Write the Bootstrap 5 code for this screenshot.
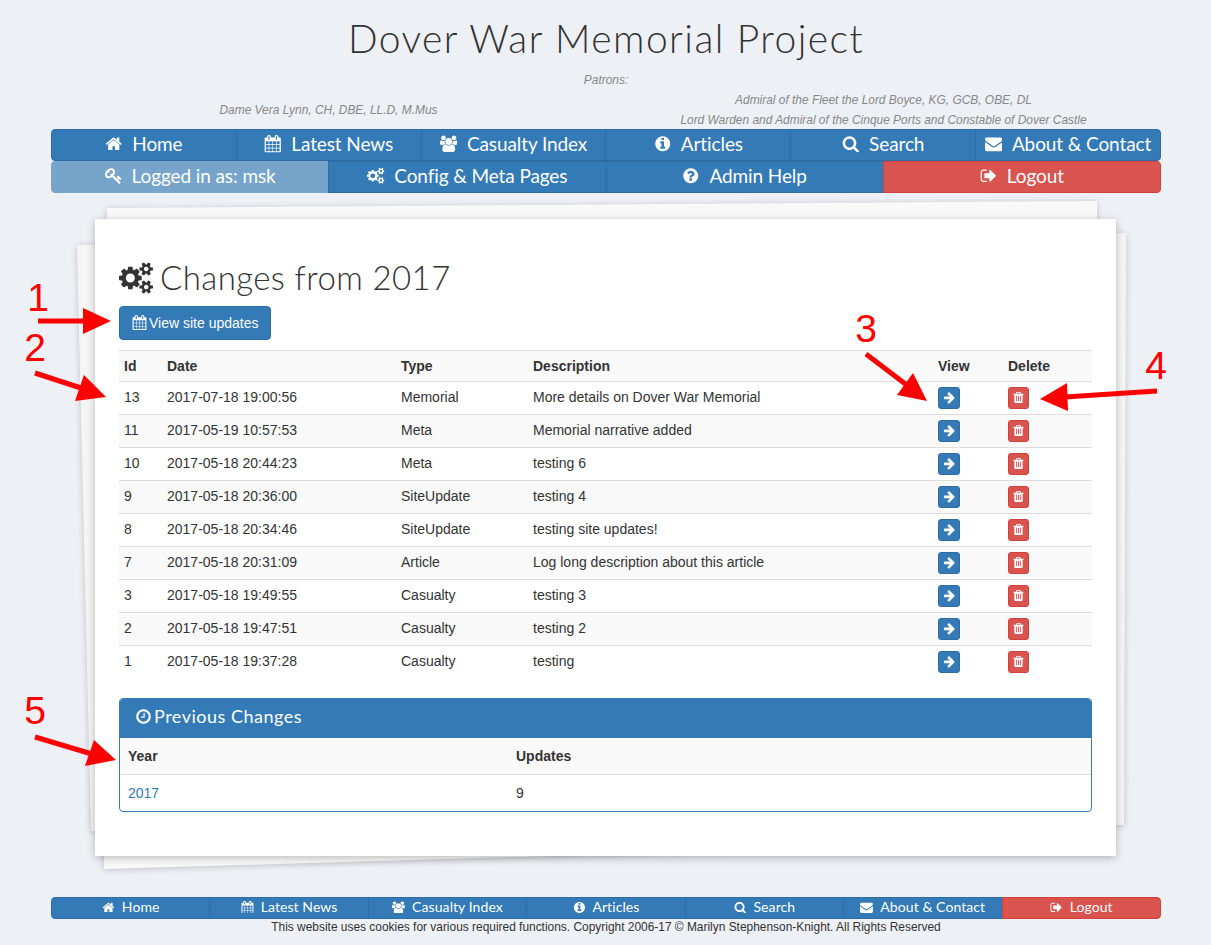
<!DOCTYPE html>
<html lang="en">
<head>
    <meta charset="utf-8">
    <meta name="viewport" content="width=device-width, initial-scale=1, shrink-to-fit=no">
    <title>Dover War Memorial Project</title>
    <link rel="stylesheet" href="https://cdn.jsdelivr.net/npm/bootstrap@5.3.0/dist/css/bootstrap.min.css">
<style>
    html, body { height: 945px; overflow: hidden; }
    body {
        position: relative;
        background: #edf0f5;
        color: #333;
        font-family: "Liberation Sans", Arial, sans-serif;
        font-size: 14px;
        line-height: 20px;
    }
    .round-font { font-family: Lato, "Noto Sans", sans-serif; }
    .page-wrap { width: 1110px; margin: 0 0 0 51px; position: relative; }
    .site-title { font-size: 39px; line-height: 44px; font-weight: 300; letter-spacing: 1.43px; padding-top: 16px; margin: 0; color: #333; }
    .patrons { font-size: 11.93px; font-style: italic; color: #888; line-height: 20px; }
    .patrons-head { margin-top: 10px; }
    .patrons-rows { margin-bottom: -1px; }
    .patron-col { width: 50%; }

    .bar-btn {
        --bs-btn-bg: #337ab7; --bs-btn-border-color: #2e6da4;
        --bs-btn-hover-bg: #337ab7; --bs-btn-hover-border-color: #2e6da4;
        --bs-btn-disabled-bg: #76a4cb; --bs-btn-disabled-border-color: #76a4cb; --bs-btn-disabled-opacity: 1;
        --bs-btn-disabled-color: #fff;
        --bs-btn-color: #fff; --bs-btn-hover-color: #fff; --bs-btn-border-radius: 4px;
    }
    .bar-logout {
        --bs-btn-bg: #d9534f; --bs-btn-border-color: #d43f3a; --bs-btn-color: #fff;
        --bs-btn-hover-bg: #d9534f; --bs-btn-hover-border-color: #d43f3a; --bs-btn-hover-color: #fff; --bs-btn-border-radius: 4px;
    }
    .top-bar .btn { height: 32px; padding: 0; font-size: 19px; line-height: 28px; letter-spacing: -.1px; flex: 1 1 0; }
    .foot-bar .btn { height: 22px; padding: 0; font-size: 14px; line-height: 18px; letter-spacing: .08px; flex: 1 1 0; }
    .ico { width: .92em; height: .92em; fill: currentColor; vertical-align: -0.1em; margin-right: .5em; }

    .paper {
        position: relative;
        width: 1021px; height: 637px;
        margin: 26px 0 0 44px;
        padding: 38px 24px 0;
        background: #fff;
        box-shadow: 0 2px 8px rgba(0,0,0,.25);
    }
    .paper-title { font-size: 33px; line-height: 40px; font-weight: 300; letter-spacing: .4px; margin: 0 0 9px; color: #333; }
    .paper-title .ico { margin-right: 7px; vertical-align: -0.14em; width: 34px; height: 34px; }
    .update-btn {
        --bs-btn-padding-x: 12px; --bs-btn-padding-y: 6px; --bs-btn-font-size: 14px; --bs-btn-line-height: 20px;
        margin-bottom: 10px; width: 152px; white-space: nowrap;
    }
    .update-btn .ico { margin-right: 2px; width: 15px; height: 15px; vertical-align: -2px; }

    .log-table {
        --bs-table-border-color: #ddd; --bs-table-striped-bg: #f9f9f9; --bs-table-color: #333; --bs-table-striped-color: #333;
        table-layout: fixed; width: 973px; margin: 0;
        border-top: 1px solid #ddd;
    }
    .log-table td, .log-table th { padding: 5px; line-height: 20px; vertical-align: top; }
    .log-table tr:last-child td { border-bottom: 0; }
    .w-id { width: 43px; } .w-date { width: 234px; } .w-type { width: 132px; }
    .w-desc { width: 405px; } .w-view { width: 70px; } .w-del { width: 89px; }
    .row-btn { --bs-btn-padding-x: 0; --bs-btn-padding-y: 0; --bs-btn-border-radius: 3px; width: 22px; height: 22px; line-height: 18px; display: block; }
    .row-btn .ico { margin: 0; width: 13px; height: 13px; vertical-align: -2px; }
    .del-btn { width: 21px; }

    .prev-card { --bs-card-border-color: #337ab7; --bs-card-border-radius: 4px; --bs-card-inner-border-radius: 3px; margin-top: 20px; height: 114px; }
    .prev-head { background: #337ab7; color: #fff; font-size: 18px; line-height: 24px; height: 39px; padding: 5px 15px; letter-spacing: .5px; border: 0; }
    .prev-head .ico { width: 17px; height: 17px; margin-right: 2px; vertical-align: -2px; }
    .prev-table { --bs-table-border-color: #ddd; --bs-table-color: #333; table-layout: fixed; margin: 0; }
    .prev-table th, .prev-table td { padding: 8px; line-height: 20px; }
    .prev-table th { background: #f9f9f9; border-bottom: 1px solid #ddd; }
    .prev-table tr:last-child td { border: 0; padding-bottom: 7px; }
    .prev-table a { color: #337ab7; text-decoration: none; }
    .w-year { width: 388px; }

    .foot-bar { margin-top: 41px; }
    .foot-note { font-size: 11.93px; line-height: 16px; text-align: center; color: #333; }

    .sheets { position: absolute; left: 0; top: 0; }
    .sheets polygon { filter: drop-shadow(0 1px 3px rgba(0,0,0,.2)); }
    .marks { position: absolute; left: 0; top: 0; pointer-events: none; z-index: 5; }
    .marks text { font-family: "Liberation Sans", Arial, sans-serif; font-size: 39px; fill: #f00; text-anchor: middle; }
</style>
</head>
    <body>
        <svg width="0" height="0" class="d-none">
            <symbol id="i-home" viewBox="0 0 1792 1792"><path d="M1472 992v480q0 26-19 45t-45 19h-384v-384h-256v384h-384q-26 0-45-19t-19-45v-480q0-1 .5-3t.5-3l575-474 575 474q1 2 1 6zm223-69l-62 74q-8 9-21 11h-3q-13 0-21-7l-692-577-692 577q-12 8-24 7-13-2-21-11l-62-74q-8-10-7-23.500t11-21.500l719-599q32-26 76-26t76 26l244 204v-195q0-14 9-23t23-9h192q14 0 23 9t9 23v408l219 182q10 8 11 21.500t-7 23.500z"/></symbol>
            <symbol id="i-cal" viewBox="0 0 1792 1792"><path d="M192 1664h288v-288h-288v288zm352 0h320v-288h-320v288zm-352-352h288v-320h-288v320zm352 0h320v-320h-320v320zm-352-384h288v-288h-288v288zm736 736h320v-288h-320v288zm-384-736h320v-288h-320v288zm768 736h288v-288h-288v288zm-384-352h320v-320h-320v320zm-352-864v-288q0-13-9.500-22.500t-22.500-9.500h-64q-13 0-22.500 9.500t-9.500 22.500v288q0 13 9.500 22.500t22.500 9.500h64q13 0 22.500-9.500t9.500-22.500zm736 864h288v-320h-288v320zm-384-384h320v-288h-320v288zm384 0h288v-288h-288v288zm32-480v-288q0-13-9.500-22.500t-22.500-9.500h-64q-13 0-22.500 9.500t-9.500 22.500v288q0 13 9.500 22.500t22.500 9.500h64q13 0 22.500-9.500t9.500-22.500zm384-64v1280q0 52-38 90t-90 38h-1408q-52 0-90-38t-38-90v-1280q0-52 38-90t90-38h128v-96q0-66 47-113t113-47h64q66 0 113 47t47 113v96h384v-96q0-66 47-113t113-47h64q66 0 113 47t47 113v96h128q52 0 90 38t38 90z"/></symbol>
            <symbol id="i-users" viewBox="0 0 1920 1792"><path d="M593 896q-162 5-265 128h-134q-82 0-138-40.500t-56-118.500q0-353 124-353 6 0 43.500 21t97.500 42.500 119 21.500q67 0 133-23-5 37-5 66 0 139 81 256zm1071 637q0 120-73 189.500t-194 69.500h-874q-121 0-194-69.500t-73-189.500q0-53 3.500-103.500t14-109 26.500-108.500 43-97.500 62-81 85.500-53.500 111.500-20q10 0 43 21.500t73 48 107 48 135 21.500 135-21.500 107-48 73-48 43-21.500q61 0 111.500 20t85.500 53.500 62 81 43 97.500 26.500 108.500 14 109 3.500 103.500zm-1024-1277q0 106-75 181t-181 75-181-75-75-181 75-181 181-75 181 75 75 181zm704 384q0 159-112.500 271.500t-271.500 112.500-271.500-112.500-112.500-271.500 112.500-271.500 271.500-112.500 271.500 112.500 112.500 271.500zm576 225q0 78-56 118.500t-138 40.500h-134q-103-123-265-128 81-117 81-256 0-29-5-66 66 23 133 23 59 0 119-21.500t97.500-42.500 43.500-21q124 0 124 353zm-128-609q0 106-75 181t-181 75-181-75-75-181 75-181 181-75 181 75 75 181z"/></symbol>
            <symbol id="i-info" viewBox="0 0 1792 1792"><path d="M1152 1376v-160q0-14-9-23t-23-9h-96v-512q0-14-9-23t-23-9h-320q-14 0-23 9t-9 23v160q0 14 9 23t23 9h96v320h-96q-14 0-23 9t-9 23v160q0 14 9 23t23 9h448q14 0 23-9t9-23zm-128-896v-160q0-14-9-23t-23-9h-192q-14 0-23 9t-9 23v160q0 14 9 23t23 9h192q14 0 23-9t9-23zm640 416q0 209-103 385.500t-279.500 279.500-385.500 103-385.500-103-279.500-279.500-103-385.500 103-385.500 279.500-279.500 385.500-103 385.500 103 279.500 279.500 103 385.500z"/></symbol>
            <symbol id="i-search" viewBox="0 0 1792 1792"><path d="M1216 832q0-185-131.500-316.500t-316.500-131.500-316.500 131.500-131.500 316.500 131.500 316.500 316.500 131.500 316.500-131.500 131.500-316.500zm512 832q0 52-38 90t-90 38q-54 0-90-38l-343-342q-179 124-399 124-143 0-273.500-55.500t-225-150-150-225-55.500-273.500 55.500-273.500 150-225 225-150 273.500-55.500 273.500 55.500 225 150 150 225 55.500 273.500q0 220-124 399l343 343q37 37 37 90z"/></symbol>
            <symbol id="i-env" viewBox="0 0 1792 1792"><path d="M1792 710v794q0 66-47 113t-113 47h-1472q-66 0-113-47t-47-113v-794q44 49 101 87 362 246 497 345 57 42 92.500 65.500t94.500 48 110 24.500h2q51 0 110-24.500t94.500-48 92.500-65.500q170-123 498-345 57-39 100-87zm0-294q0 79-49 151t-122 123q-376 261-468 325-10 7-42.500 30.500t-54 38-52 32.500-57.500 27-50 9h-2q-23 0-50-9t-57.500-27-52-32.500-54-38-42.500-30.500q-91-64-262-182.500t-205-142.500q-62-42-117-115.500t-55-136.500q0-78 41.500-130t118.500-52h1472q65 0 112.500 47t47.500 113z"/></symbol>
            <symbol id="i-key" viewBox="0 0 1792 1792"><path d="M832 512q0-80-56-136t-136-56-136 56-56 136q0 42 19 83-41-19-83-19-80 0-136 56t-56 136 56 136 136 56 136-56 56-136q0-42-19-83 41 19 83 19 80 0 136-56t56-136zm851 704q0 17-49 66t-66 49q-9 0-28.500-16t-36.500-33-38.500-40-24.500-26l-96 96 220 220q28 28 28 68 0 42-39 81t-81 39q-40 0-68-28l-671-671q-176 131-365 131-163 0-265.500-102.500t-102.500-265.500q0-160 95-313t248-248 313-95q163 0 265.500 102.500t102.500 265.500q0 189-131 365l355 355 96-96q-3-3-26-24.500t-40-38.500-33-36.500-16-28.500q0-17 49-66t66-49q13 0 23 10 6 6 46 44.500t82 79.500 86.500 86 73 78 28.500 41z"/></symbol>
            <symbol id="i-cogs" viewBox="0 0 1920 1792"><path d="M896 896q0-106-75-181t-181-75-181 75-75 181 75 181 181 75 181-75 75-181zm768 512q0-52-38-90t-90-38-90 38-38 90q0 53 37.500 90.500t90.500 37.500 90.500-37.500 37.500-90.500zm0-1024q0-52-38-90t-90-38-90 38-38 90q0 53 37.500 90.500t90.500 37.500 90.500-37.500 37.500-90.500zm-384 421v185q0 10-7 19.500t-16 10.500l-155 24q-11 35-32 76 34 48 90 115 7 11 7 20 0 12-7 19-23 30-82.500 89.500t-78.500 59.500q-11 0-21-7l-115-90q-37 19-77 31-11 108-23 155-7 24-30 24h-186q-11 0-20-7.500t-10-17.500l-23-153q-34-10-75-31l-118 89q-7 7-20 7-11 0-21-8-144-133-144-160 0-9 7-19 10-14 41-53t47-61q-23-44-35-82l-152-24q-10-1-17-9.500t-7-19.500v-185q0-10 7-19.500t16-10.500l155-24q11-35 32-76-34-48-90-115-7-11-7-20 0-12 7-20 22-30 82-89t79-59q11 0 21 7l115 90q34-18 77-32 11-108 23-154 7-24 30-24h186q11 0 20 7.500t10 17.500l23 153q34 10 75 31l118-89q8-7 20-7 11 0 21 8 144 133 144 160 0 8-7 19-12 16-42 54t-45 60q23 48 34 82l152 23q10 2 17 10.500t7 19.500zm640 533v140q0 16-149 31-12 27-30 52 51 113 51 138 0 4-4 7-122 71-124 71-8 0-46-47t-52-68q-20 2-30 2t-30-2q-14 21-52 68t-46 47q-2 0-124-71-4-3-4-7 0-25 51-138-18-25-30-52-149-15-149-31v-140q0-16 149-31 13-29 30-52-51-113-51-138 0-4 4-7 4-2 35-20t59-34 30-16q8 0 46 46.500t52 67.500q20-2 30-2t30 2q51-71 92-112l6-2q4 0 124 70 4 3 4 7 0 25-51 138 17 23 30 52 149 15 149 31zm0-1024v140q0 16-149 31-12 27-30 52 51 113 51 138 0 4-4 7-122 71-124 71-8 0-46-47t-52-68q-20 2-30 2t-30-2q-14 21-52 68t-46 47q-2 0-124-71-4-3-4-7 0-25 51-138-18-25-30-52-149-15-149-31v-140q0-16 149-31 13-29 30-52-51-113-51-138 0-4 4-7 4-2 35-20t59-34 30-16q8 0 46 46.500t52 67.500q20-2 30-2t30 2q51-71 92-112l6-2q4 0 124 70 4 3 4 7 0 25-51 138 17 23 30 52 149 15 149 31z"/></symbol>
            <symbol id="i-help" viewBox="0 0 1792 1792"><path d="M1024 1376v-192q0-14-9-23t-23-9h-192q-14 0-23 9t-9 23v192q0 14 9 23t23 9h192q14 0 23-9t9-23zm256-672q0-88-55.500-163t-138.500-116-170-41q-243 0-371 213-15 24 8 42l132 100q7 6 19 6 16 0 25-12 53-68 86-92 34-24 86-24 48 0 85.500 26t37.500 59q0 38-20 61t-68 45q-63 28-115.500 86.500t-52.500 125.500v36q0 14 9 23t23 9h192q14 0 23-9t9-23q0-19 21.500-49.500t54.500-49.500q32-18 49-28.500t46-35 44.500-48 28-60.500 12.500-81zm384 192q0 209-103 385.500t-279.500 279.500-385.500 103-385.500-103-279.500-279.500-103-385.500 103-385.500 279.500-279.500 385.500-103 385.500 103 279.500 279.500 103 385.500z"/></symbol>
            <symbol id="i-out" viewBox="0 0 1792 1792"><path d="M704 1440q0 4 1 20t.5 26.500-3 23.500-10 19.500-20.500 6.500h-320q-119 0-203.500-84.500t-84.500-203.500v-704q0-119 84.500-203.500t203.500-84.500h320q13 0 22.500 9.500t9.500 22.500q0 4 1 20t.5 26.500-3 23.500-10 19.500-20.500 6.500h-320q-66 0-113 47t-47 113v704q0 66 47 113t113 47h312l11.500 1 11.500 3 8 5.500 7 9 2 13.500zm928-544q0 26-19 45l-544 544q-19 19-45 19t-45-19-19-45v-288h-448q-26 0-45-19t-19-45v-384q0-26 19-45t45-19h448v-288q0-26 19-45t45-19 45 19l544 544q19 19 19 45z"/></symbol>
            <symbol id="i-arrow" viewBox="0 0 1792 1792"><path d="M1600 960q0 54-37 91l-651 651q-39 37-91 37-51 0-90-37l-75-75q-38-38-38-91t38-91l293-293h-704q-52 0-84.500-37.500t-32.500-90.500v-128q0-53 32.500-90.500t84.500-37.500h704l-293-294q-38-36-38-90t38-90l75-75q38-38 90-38 53 0 91 38l651 651q37 35 37 90z"/></symbol>
            <symbol id="i-trash" viewBox="0 0 1792 1792"><path d="M704 1376v-704q0-14-9-23t-23-9h-64q-14 0-23 9t-9 23v704q0 14 9 23t23 9h64q14 0 23-9t9-23zm256 0v-704q0-14-9-23t-23-9h-64q-14 0-23 9t-9 23v704q0 14 9 23t23 9h64q14 0 23-9t9-23zm256 0v-704q0-14-9-23t-23-9h-64q-14 0-23 9t-9 23v704q0 14 9 23t23 9h64q14 0 23-9t9-23zm-544-992h448l-48-117q-7-9-17-11h-317q-10 2-17 11zm928 32v64q0 14-9 23t-23 9h-96v948q0 83-47 143.500t-113 60.500h-832q-66 0-113-58.500t-47-141.500v-952h-96q-14 0-23-9t-9-23v-64q0-14 9-23t23-9h309l70-167q15-37 54-63t79-26h320q40 0 79 26t54 63l70 167h309q14 0 23 9t9 23z"/></symbol>
            <symbol id="i-clock" viewBox="0 0 1792 1792"><path d="M1024 544v448q0 14-9 23t-23 9h-320q-14 0-23-9t-9-23v-64q0-14 9-23t23-9h224v-352q0-14 9-23t23-9h64q14 0 23 9t9 23zm416 352q0-148-73-273t-198-198-273-73-273 73-198 198-73 273 73 273 198 198 273 73 273-73 198-198 73-273zm224 0q0 209-103 385.500t-279.500 279.500-385.500 103-385.500-103-279.500-279.500-103-385.500 103-385.500 279.500-279.500 385.500-103 385.500 103 279.500 279.500 103 385.500z"/></symbol>
        </svg>

        <!-- hojas de fondo -->
        <svg class="sheets" width="1211" height="945">
            <polygon points="107,208 1097,201 1098,840 104,869" fill="#f9f9f9"/>
            <polygon points="77,245 1126,233 1124,825 91,831" fill="#f5f5f5"/>
        </svg>

        <div class="page-wrap">
            <h1 class="site-title round-font text-center">Dover War Memorial Project</h1>
            <div class="patrons patrons-head text-center">Patrons:</div>
            <div class="patrons patrons-rows d-flex align-items-center text-center">
                <div class="patron-col">Dame Vera Lynn, CH, DBE, LL.D, M.Mus</div>
                <div class="patron-col">Admiral of the Fleet the Lord Boyce, KG, GCB, OBE, DL<br>Lord Warden and Admiral of the Cinque Ports and Constable of Dover Castle</div>
            </div>

            <div class="btn-group w-100 top-bar round-font d-flex">
                <a href="#" class="btn bar-btn"><svg class="ico"><use href="#i-home"/></svg>Home</a>
                <a href="#" class="btn bar-btn"><svg class="ico"><use href="#i-cal"/></svg>Latest News</a>
                <a href="#" class="btn bar-btn"><svg class="ico"><use href="#i-users"/></svg>Casualty Index</a>
                <a href="#" class="btn bar-btn"><svg class="ico"><use href="#i-info"/></svg>Articles</a>
                <a href="#" class="btn bar-btn"><svg class="ico"><use href="#i-search"/></svg>Search</a>
                <a href="#" class="btn bar-btn"><svg class="ico"><use href="#i-env"/></svg>About &amp; Contact</a>
            </div>
            <div class="btn-group w-100 top-bar round-font d-flex">
                <a href="#" class="btn bar-btn disabled"><svg class="ico"><use href="#i-key"/></svg>Logged in as: msk</a>
                <a href="#" class="btn bar-btn"><svg class="ico"><use href="#i-cogs"/></svg>Config &amp; Meta Pages</a>
                <a href="#" class="btn bar-btn"><svg class="ico"><use href="#i-help"/></svg>Admin Help</a>
                <a href="#" class="btn bar-logout"><svg class="ico"><use href="#i-out"/></svg>Logout</a>
            </div>

            <div class="paper">
                <h2 class="paper-title round-font"><svg class="ico"><use href="#i-cogs"/></svg>Changes from 2017</h2>
                <a href="#" class="btn bar-btn update-btn"><svg class="ico"><use href="#i-cal"/></svg>View site updates</a>

                <table class="table table-striped log-table">
                    <colgroup><col class="w-id"><col class="w-date"><col class="w-type"><col class="w-desc"><col class="w-view"><col class="w-del"></colgroup>
                    <tbody id="logRows">
                        <tr><th>Id</th><th>Date</th><th>Type</th><th>Description</th><th>View</th><th>Delete</th></tr>
                    </tbody>
                </table>

                <div class="card prev-card overflow-hidden">
                    <div class="card-header prev-head round-font"><svg class="ico"><use href="#i-clock"/></svg>Previous Changes</div>
                    <table class="table prev-table">
                        <colgroup><col class="w-year"><col></colgroup>
                        <tbody>
                            <tr><th>Year</th><th>Updates</th></tr>
                            <tr><td><a href="#">2017</a></td><td>9</td></tr>
                        </tbody>
                    </table>
                </div>
            </div>

            <div class="btn-group w-100 foot-bar round-font d-flex">
                <a href="#" class="btn bar-btn"><svg class="ico"><use href="#i-home"/></svg>Home</a>
                <a href="#" class="btn bar-btn"><svg class="ico"><use href="#i-cal"/></svg>Latest News</a>
                <a href="#" class="btn bar-btn"><svg class="ico"><use href="#i-users"/></svg>Casualty Index</a>
                <a href="#" class="btn bar-btn"><svg class="ico"><use href="#i-info"/></svg>Articles</a>
                <a href="#" class="btn bar-btn"><svg class="ico"><use href="#i-search"/></svg>Search</a>
                <a href="#" class="btn bar-btn"><svg class="ico"><use href="#i-env"/></svg>About &amp; Contact</a>
                <a href="#" class="btn bar-logout"><svg class="ico"><use href="#i-out"/></svg>Logout</a>
            </div>
            <div class="foot-note">This website uses cookies for various required functions. Copyright 2006-17 &copy; Marilyn Stephenson-Knight. All Rights Reserved</div>
        </div>

        <!-- flechas y numeros de la captura -->
        <svg class="marks" width="1211" height="945">
            <g stroke="#f00" stroke-width="5"><line x1="38" y1="321" x2="86" y2="321"/><line x1="35" y1="373" x2="84" y2="389"/><line x1="866" y1="354" x2="908" y2="386"/><line x1="1157" y1="391" x2="1065" y2="397"/><line x1="35" y1="737" x2="92" y2="754"/></g>
            <g fill="#f00">
                <polygon points="83,308 111,321 83,334"/>
                <polygon points="84,375 106,397 75,401"/>
                <polygon points="913,373 927,401 897,395"/>
                <polygon points="1067,383 1040,399 1068,411"/>
                <polygon points="94,740 116,760 85,766"/>
            </g>
            <text x="38" y="311">1</text>
            <text x="35" y="361">2</text>
            <text x="866" y="342">3</text>
            <text x="1156" y="379">4</text>
            <text x="35" y="724">5</text>
        </svg>

        <script>
            // filas del registro de cambios
            var filas = [
                [13, "2017-07-18 19:00:56", "Memorial", "More details on Dover War Memorial"],
                [11, "2017-05-19 10:57:53", "Meta", "Memorial narrative added"],
                [10, "2017-05-18 20:44:23", "Meta", "testing 6"],
                [9, "2017-05-18 20:36:00", "SiteUpdate", "testing 4"],
                [8, "2017-05-18 20:34:46", "SiteUpdate", "testing site updates!"],
                [7, "2017-05-18 20:31:09", "Article", "Log long description about this article"],
                [3, "2017-05-18 19:49:55", "Casualty", "testing 3"],
                [2, "2017-05-18 19:47:51", "Casualty", "testing 2"],
                [1, "2017-05-18 19:37:28", "Casualty", "testing"]
            ];
            var cuerpo = document.getElementById("logRows");
            filas.forEach(function(f) {
                var tr = document.createElement("tr");
                tr.innerHTML = `<td>${f[0]}</td><td>${f[1]}</td><td>${f[2]}</td><td>${f[3]}</td>` +
                    `<td><a href="#" class="btn bar-btn row-btn"><svg class="ico"><use href="#i-arrow"/></svg></a></td>` +
                    `<td><a href="#" class="btn bar-logout row-btn del-btn"><svg class="ico"><use href="#i-trash"/></svg></a></td>`;
                cuerpo.appendChild(tr);
            });
        </script>
        <script src="https://cdn.jsdelivr.net/npm/bootstrap@5.3.0/dist/js/bootstrap.bundle.min.js"></script>
    </body>
</html>
